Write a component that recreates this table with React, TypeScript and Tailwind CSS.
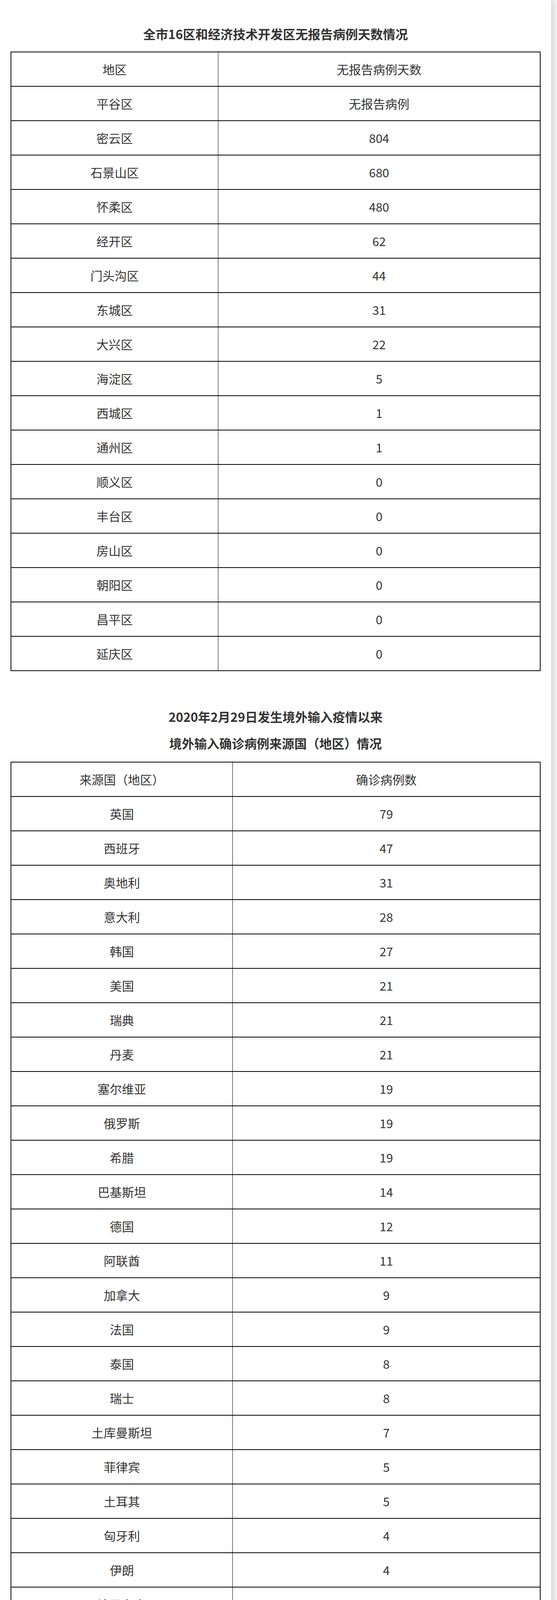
const districts: [string, string][] = [
  ["平谷区", "无报告病例"],
  ["密云区", "804"],
  ["石景山区", "680"],
  ["怀柔区", "480"],
  ["经开区", "62"],
  ["门头沟区", "44"],
  ["东城区", "31"],
  ["大兴区", "22"],
  ["海淀区", "5"],
  ["西城区", "1"],
  ["通州区", "1"],
  ["顺义区", "0"],
  ["丰台区", "0"],
  ["房山区", "0"],
  ["朝阳区", "0"],
  ["昌平区", "0"],
  ["延庆区", "0"],
];

const sources: [string, string][] = [
  ["英国", "79"],
  ["西班牙", "47"],
  ["奥地利", "31"],
  ["意大利", "28"],
  ["韩国", "27"],
  ["美国", "21"],
  ["瑞典", "21"],
  ["丹麦", "21"],
  ["塞尔维亚", "19"],
  ["俄罗斯", "19"],
  ["希腊", "19"],
  ["巴基斯坦", "14"],
  ["德国", "12"],
  ["阿联酋", "11"],
  ["加拿大", "9"],
  ["法国", "9"],
  ["泰国", "8"],
  ["瑞士", "8"],
  ["土库曼斯坦", "7"],
  ["菲律宾", "5"],
  ["土耳其", "5"],
  ["匈牙利", "4"],
  ["伊朗", "4"],
  ["津巴布韦", "3"],
  ["印度尼西亚", "2"],
  ["巴布亚新几内亚", "2"],
  ["摩尔多瓦", "2"],
  ["波兰", "2"],
  ["埃塞俄比亚", "2"],
  ["日本", "2"],
  ["卢森堡", "1"],
  ["挪威", "1"],
  ["比利时", "1"],
  ["巴西", "1"],
  ["荷兰", "1"],
  ["墨西哥", "1"],
  ["约旦", "1"],
  ["赤道几内亚", "1"],
  ["乌兹别克斯坦", "1"],
  ["新加坡", "1"],
  ["中国香港", "249"],
  ["中国台湾", "2"],
  ["合计", "704"],
];

const DataTable = ({ rows, wide }: { rows: [string, string][]; wide?: boolean }) => (
  <div className="border-x-2 border-t-2 border-black text-[31px] leading-[40px]">
    {rows.map(([a, b], i) => (
      <div key={i} className="flex h-[88px] border-b-2 border-black">
        <div
          className={
            "flex shrink-0 items-center justify-center border-r border-black " +
            (wide ? "w-[567px]" : "w-[530px]")
          }
        >
          {a}
        </div>
        <div className="flex flex-1 items-center justify-center">{b}</div>
      </div>
    ))}
  </div>
);

export default function App() {
  return (
    <div
      className="h-[6436px] overflow-hidden bg-[#f3f3f3] text-[#333]"
      style={{ fontFamily: '"Noto Sans CJK SC", "Noto Sans", sans-serif' }}
    >
      <div className="w-[1411px] rounded-bl-[16px] rounded-br-[30px] bg-white px-[27px] pb-[76px] pt-[66px] shadow-[0_0_18px_rgba(0,0,0,0.22)]">
        <h2 className="mb-[26px] text-center text-[32px] font-bold leading-[40px]">
          全市16区和经济技术开发区无报告病例天数情况
        </h2>
        <DataTable rows={[["地区", "无报告病例天数"], ...districts]} />

        <div className="mt-[96px] mb-[28px] flex flex-col gap-[28px] text-center text-[32px] font-bold leading-[40px]">
          <p>2020年2月29日发生境外输入疫情以来</p>
          <p>境外输入确诊病例来源国（地区）情况</p>
        </div>
        <DataTable wide rows={[["来源国（地区）", "确诊病例数"], ...sources]} />

        <p className="mt-[84px] text-justify text-[33.5px] leading-[54.5px]">
          各单位、各部门、各行业要压紧压实“四方责任”，建立人员台账，加强单位员工及流动人员防控管理。餐馆、学校、农贸市场等人员流动较大的公共场所要坚持做好验码测温、通风消毒等防控措施。请与病例活动轨迹有交集人员，尤其是近期到访过官方发布的涉疫餐馆、小吃店等餐饮机构风险点位的人员，以及接到健康宝弹窗提示人员立即向社区、单位报告，配合各项防控措施。核酸检测时要有序排队、不扎推、注意手部卫生、保持安全社交距离，核酸检测结果未出之前，自觉做到不聚集、不离京。“五一”假期将至，人员流动增加了传播风险，提醒广大市民朋友，近期非必要不出京，倡导就地过节，减少人员流动，简约生活，不聚餐聚会，外出选择到空旷的室外活动。
        </p>
      </div>
    </div>
  );
}
